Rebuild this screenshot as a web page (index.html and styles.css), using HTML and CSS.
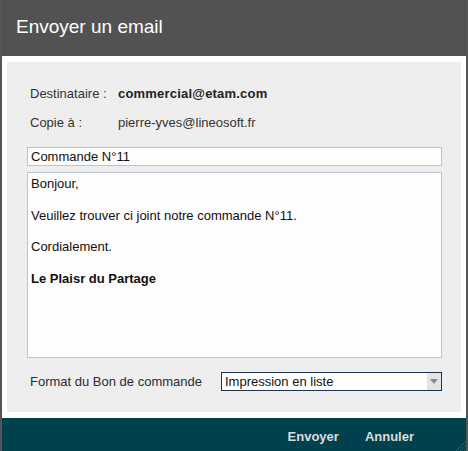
FILE: index.html
```html
<!DOCTYPE html>
<html lang="fr">
<head>
<meta charset="utf-8">
<title>Envoyer un email</title>
<link rel="stylesheet" href="styles.css">
</head>
<body>
<div class="dialog">
  <div class="titlebar">Envoyer un email</div>
  <div class="content">
    <div class="panel">
      <div class="row row-first">
        <span class="label">Destinataire :</span>
        <span class="value strong">commercial@etam.com</span>
      </div>
      <div class="row">
        <span class="label">Copie à :</span>
        <span class="value">pierre-yves@lineosoft.fr</span>
      </div>
      <div class="subject">Commande N°11</div>
      <div class="body-text">
        <p>Bonjour,</p>
        <p>Veuillez trouver ci joint notre commande N°11.</p>
        <p>Cordialement.</p>
        <p class="strong">Le Plaisr du Partage</p>
      </div>
      <div class="format-row">
        <span class="format-label">Format du Bon de commande</span>
        <div class="select">
          <span class="select-text">Impression en liste</span>
          <span class="select-arrow"><svg width="8" height="5" viewBox="0 0 8 5"><path d="M0 0H8L4 5Z" fill="#8a8a8a"/></svg></span>
        </div>
      </div>
    </div>
  </div>
  <div class="footer">
    <span class="btn">Envoyer</span>
    <span class="btn">Annuler</span>
    <svg class="grip" width="11" height="11" viewBox="0 0 11 11"><path d="M11 1L1 11M11 5L5 11M11 9L9 11" stroke="#2d6273" stroke-width="1"/></svg>
  </div>
</div>
</body>
</html>
```

FILE: styles.css
```css
html, body {
  margin: 0;
  padding: 0;
  background: #ffffff;
}
body {
  font-family: "Liberation Sans", Arial, sans-serif;
  font-size: 13px;
  color: #222;
}
.dialog {
  position: relative;
  width: 464px;
  height: 451px;
  border-left: 2px solid #555555;
  border-right: 2px solid #555555;
  background: #ffffff;
  display: flex;
  flex-direction: column;
}
.titlebar {
  height: 56px;
  box-sizing: border-box;
  background: #525252;
  color: #ffffff;
  font-size: 19px;
  line-height: 22px;
  padding: 16px 0 0 14px;
}
.content {
  padding: 6px 5px 6px 5px;
}
.panel {
  background: #eeeeee;
  height: 350px;
  box-sizing: border-box;
  padding: 24px 19px 0 20px;
}
.row {
  display: flex;
  height: 16px;
  line-height: 16px;
  padding-left: 3px;
  margin-top: 13px;
  color: #333;
}
.row-first {
  margin-top: 0;
}
.label {
  width: 88px;
}
.strong {
  font-weight: bold;
}
.value.strong {
  color: #222;
  letter-spacing: 0.2px;
}
.subject {
  margin-top: 16px;
  height: 19px;
  box-sizing: border-box;
  border: 1px solid #b8c4d0;
  background: #fdfdfd;
  padding: 0 3px;
  line-height: 17px;
  color: #111;
}
.body-text {
  margin-top: 6px;
  height: 186px;
  box-sizing: border-box;
  border: 1px solid #b8c4d0;
  background: #fdfdfd;
  padding: 3px 3px;
  color: #111;
}
.body-text p {
  margin: 0 0 15.7px 0;
  line-height: 16px;
}
.format-row {
  margin-top: 14px;
  display: flex;
  align-items: center;
  height: 19px;
}
.format-label {
  width: 191px;
  padding-left: 3px;
  color: #2a2a3a;
}
.select {
  flex: 1;
  height: 19px;
  box-sizing: border-box;
  border: 1px solid #1c3550;
  background: #ffffff;
  display: flex;
  align-items: center;
  justify-content: space-between;
}
.select-text {
  padding-left: 3px;
  color: #111;
  line-height: 17px;
}
.select-arrow {
  width: 14px;
  height: 17px;
  background: #e4e4e4;
  display: flex;
  align-items: center;
  justify-content: center;
}
.footer {
  position: relative;
  flex: 1;
  background: #00404f;
  display: flex;
  justify-content: flex-end;
  align-items: center;
  gap: 26px;
  padding: 4px 52px 0 0;
}
.btn {
  font-weight: bold;
  color: #dcdcdc;
}
.grip {
  position: absolute;
  right: 0;
  bottom: 0;
}
```
